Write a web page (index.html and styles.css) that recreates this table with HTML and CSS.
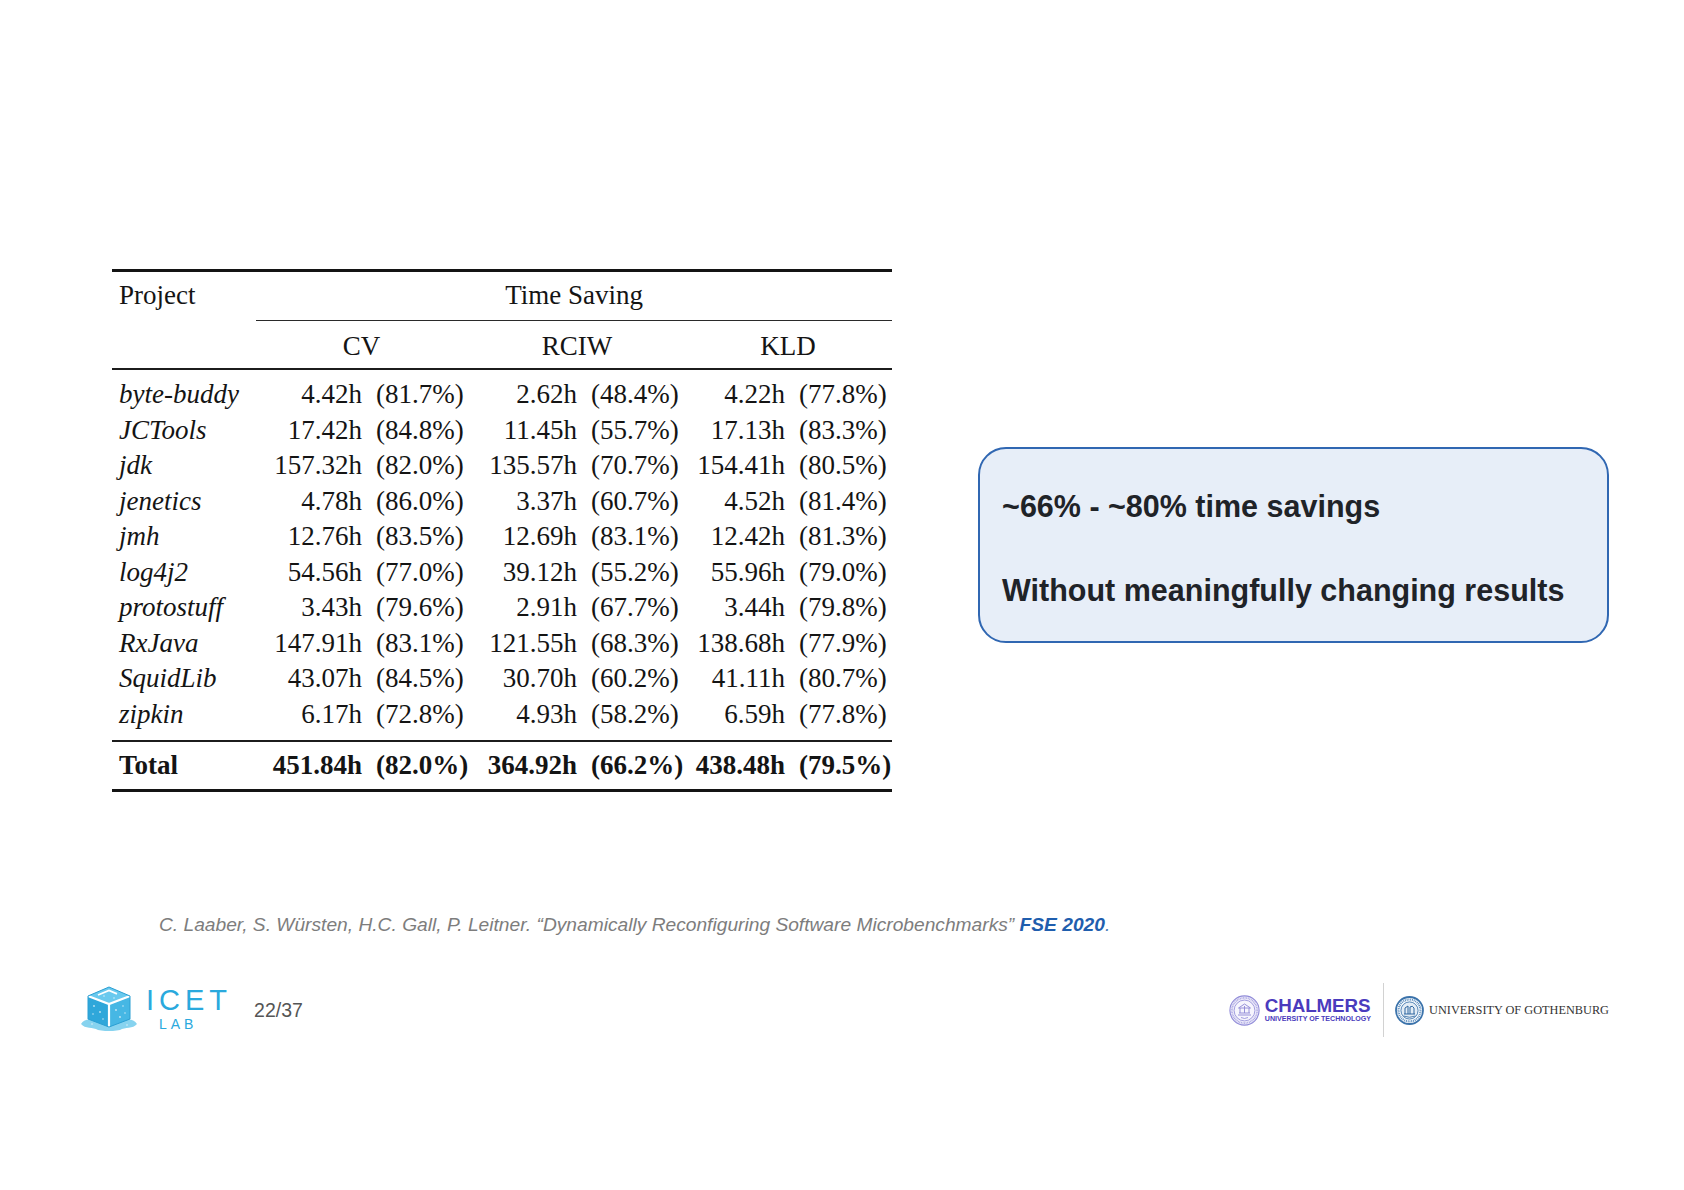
FILE: index.html
```html
<!DOCTYPE html>
<html lang="en">
<head>
<meta charset="utf-8">
<title>Time Saving</title>
<link rel="stylesheet" href="styles.css">
</head>
<body>
<div class="slide">
  <div class="content">
    <table class="results">
      <colgroup>
        <col class="c-proj"><col class="c-h1"><col class="c-p1"><col class="c-h2"><col class="c-p2"><col class="c-h3"><col class="c-p3">
      </colgroup>
      <thead>
        <tr class="head-top">
          <th class="proj">Project</th>
          <th class="group" colspan="6"><div class="cmid">Time Saving</div></th>
        </tr>
        <tr class="head-sub">
          <th class="proj"></th>
          <th class="sub" colspan="2">CV</th>
          <th class="sub" colspan="2">RCIW</th>
          <th class="sub" colspan="2">KLD</th>
        </tr>
      </thead>
      <tbody class="data">
        <tr><td class="name">byte-buddy</td><td>4.42h</td><td>(81.7%)</td><td>2.62h</td><td>(48.4%)</td><td>4.22h</td><td>(77.8%)</td></tr>
        <tr><td class="name">JCTools</td><td>17.42h</td><td>(84.8%)</td><td>11.45h</td><td>(55.7%)</td><td>17.13h</td><td>(83.3%)</td></tr>
        <tr><td class="name">jdk</td><td>157.32h</td><td>(82.0%)</td><td>135.57h</td><td>(70.7%)</td><td>154.41h</td><td>(80.5%)</td></tr>
        <tr><td class="name">jenetics</td><td>4.78h</td><td>(86.0%)</td><td>3.37h</td><td>(60.7%)</td><td>4.52h</td><td>(81.4%)</td></tr>
        <tr><td class="name">jmh</td><td>12.76h</td><td>(83.5%)</td><td>12.69h</td><td>(83.1%)</td><td>12.42h</td><td>(81.3%)</td></tr>
        <tr><td class="name">log4j2</td><td>54.56h</td><td>(77.0%)</td><td>39.12h</td><td>(55.2%)</td><td>55.96h</td><td>(79.0%)</td></tr>
        <tr><td class="name">protostuff</td><td>3.43h</td><td>(79.6%)</td><td>2.91h</td><td>(67.7%)</td><td>3.44h</td><td>(79.8%)</td></tr>
        <tr><td class="name">RxJava</td><td>147.91h</td><td>(83.1%)</td><td>121.55h</td><td>(68.3%)</td><td>138.68h</td><td>(77.9%)</td></tr>
        <tr><td class="name">SquidLib</td><td>43.07h</td><td>(84.5%)</td><td>30.70h</td><td>(60.2%)</td><td>41.11h</td><td>(80.7%)</td></tr>
        <tr><td class="name">zipkin</td><td>6.17h</td><td>(72.8%)</td><td>4.93h</td><td>(58.2%)</td><td>6.59h</td><td>(77.8%)</td></tr>
      </tbody>
      <tbody class="total">
        <tr><td class="tname">Total</td><td>451.84h</td><td>(82.0%)</td><td>364.92h</td><td>(66.2%)</td><td>438.48h</td><td>(79.5%)</td></tr>
      </tbody>
    </table>

    <div class="callout">
      <p class="callout-line">~66% - ~80% time savings</p>
      <p class="callout-line second">Without meaningfully changing results</p>
    </div>
  </div>

  <p class="cite">C. Laaber, S. Würsten, H.C. Gall, P. Leitner. “Dynamically Reconfiguring Software Microbenchmarks” <span class="venue">FSE 2020</span><span class="venue-dot">.</span></p>

  <footer class="footer">
    <div class="brand">
      <svg class="cube" width="58" height="47" viewBox="0 0 58 47" aria-hidden="true">
        <path d="M1 40 C5 34 11 36 14 33 L44 33 C47 36 53 34 57 40 C53 45 45 43 40 46 C34 47.5 24 47.5 18 46 C13 43 5 45 1 40 Z" fill="#5fc4ea" opacity="0.75"/>
        <polygon points="8,12 29,20 29,43 8,35" fill="#2fa7da"/>
        <polygon points="50,12 50,35 29,43 29,20" fill="#46b7e4"/>
        <polygon points="29,3 50,12 29,20 8,12" fill="#69c9ee"/>
        <polyline points="8,12 29,20 50,12" fill="none" stroke="#ffffff" stroke-width="2.2"/>
        <line x1="29" y1="20" x2="29" y2="43" stroke="#ffffff" stroke-width="2.2"/>
        <polyline points="18,11 29,6.5 37,9.8" fill="none" stroke="#ffffff" stroke-width="1.8"/>
        <polyline points="8,12 8,35 29,43 50,35 50,12 29,3 8,12" fill="none" stroke="#2a9fd3" stroke-width="1"/>
        <g fill="#ffffff" opacity="0.7">
          <circle cx="14" cy="22" r="0.9"/><circle cx="20" cy="28" r="0.9"/><circle cx="13" cy="30" r="0.8"/>
          <circle cx="23" cy="35" r="0.8"/><circle cx="36" cy="26" r="0.9"/><circle cx="43" cy="22" r="0.8"/>
          <circle cx="40" cy="33" r="0.9"/><circle cx="45" cy="29" r="0.8"/><circle cx="24" cy="12" r="0.8"/>
          <circle cx="34" cy="14" r="0.8"/><circle cx="12" cy="40" r="0.8"/><circle cx="47" cy="41" r="0.8"/>
        </g>
      </svg>
      <div class="icet">
        <span class="icet-name">ICET</span>
        <span class="icet-lab">LAB</span>
      </div>
      <span class="page-num">22/37</span>
    </div>
    <div class="partners">
      <svg class="seal" width="31" height="31" viewBox="0 0 31 31" aria-hidden="true">
        <circle cx="15.5" cy="15.5" r="14.6" fill="#eceaf9" stroke="#908bd8" stroke-width="1.1"/>
        <circle cx="15.5" cy="15.5" r="12.6" fill="none" stroke="#a7a3e1" stroke-width="1.6" stroke-dasharray="0.8 0.8"/>
        <circle cx="15.5" cy="15.5" r="10.4" fill="#f6f5fd" stroke="#908bd8" stroke-width="0.8"/>
        <path d="M9 20 L22 20 M10 18 L21 18 M11 18 L11 13 M15.5 18 L15.5 11 M20 18 L20 13 M9.5 13 L15.5 9 L21.5 13 Z" fill="none" stroke="#8c87d5" stroke-width="0.9"/>
        <path d="M12 22.5 Q15.5 24.5 19 22.5" fill="none" stroke="#8c87d5" stroke-width="0.8"/>
      </svg>
      <div class="chalmers">
        <span class="chalmers-name">CHALMERS</span>
        <span class="chalmers-sub">UNIVERSITY OF TECHNOLOGY</span>
      </div>
      <span class="divider"></span>
      <svg class="seal gu" width="29" height="29" viewBox="0 0 29 29" aria-hidden="true">
        <circle cx="14.5" cy="14.5" r="13.5" fill="#ffffff" stroke="#3b73ab" stroke-width="1.8"/>
        <circle cx="14.5" cy="14.5" r="11" fill="none" stroke="#5f8fbf" stroke-width="2.2" stroke-dasharray="1 0.8"/>
        <circle cx="14.5" cy="14.5" r="8.6" fill="#e3ecf5" stroke="#3b73ab" stroke-width="0.9"/>
        <path d="M9 18 L20 18 M10 18 L10 12 L13 10 L13 18 M15 18 L15 11 Q17.5 9 19 12 L19 18" fill="none" stroke="#2f66a0" stroke-width="1"/>
        <path d="M8.5 20 Q14.5 22.5 20.5 20" fill="none" stroke="#2f66a0" stroke-width="0.8"/>
      </svg>
      <span class="gu-name">UNIVERSITY OF GOTHENBURG</span>
    </div>
  </footer>
</div>
</body>
</html>
```

FILE: styles.css
```css
html, body {
  margin: 0;
  padding: 0;
  background: #ffffff;
}

.slide {
  width: 1684px;
  height: 1190px;
  box-sizing: border-box;
  padding: 269px 75px 0 80px;
  overflow: hidden;
}

.content {
  display: flex;
  align-items: flex-start;
  gap: 86px;
  margin-left: 32px;
}

/* ---------- table ---------- */
.results {
  width: 780px;
  flex: none;
  table-layout: fixed;
  border-collapse: separate;
  border-spacing: 0;
  border-top: 3px solid #141414;
  border-bottom: 3px solid #141414;
  font-family: "Liberation Serif", "Times New Roman", serif;
  font-size: 27px;
  color: #141414;
}

.c-proj { width: 141px; }
.c-h1 { width: 116px; }
.c-p1 { width: 101px; }
.c-h2 { width: 114px; }
.c-p2 { width: 100px; }
.c-h3 { width: 108px; }
.c-p3 { width: 100px; }

.results th,
.results td {
  padding: 0 7px;
  line-height: 35.55px;
  white-space: nowrap;
  font-weight: normal;
  text-align: right;
}

.results th.proj {
  text-align: left;
  padding-top: 6px;
  padding-bottom: 6px;
  vertical-align: top;
}

.head-top .group {
  padding: 0 0 0 3px;
  text-align: center;
}

.cmid {
  padding: 6px 0;
  border-bottom: 1px solid #2a2a2a;
}

.head-sub th {
  padding-top: 8px;
  padding-bottom: 4px;
  border-bottom: 2px solid #1c1c1c;
}

.head-sub th.proj {
  padding-top: 8px;
  padding-bottom: 4px;
}

.head-sub .sub {
  text-align: center;
}

.results td.name {
  text-align: left;
  font-style: italic;
}

.data tr:first-child td {
  padding-top: 7px;
}

.data tr:last-child td {
  padding-bottom: 7px;
  border-bottom: 2px solid #1c1c1c;
}

.total td {
  font-weight: bold;
  padding-top: 6px;
  padding-bottom: 6px;
}

.results td.tname {
  text-align: left;
}

/* ---------- callout ---------- */
.callout {
  flex: none;
  width: 631px;
  box-sizing: border-box;
  margin-top: 178px;
  padding: 39px 22px 33px;
  border: 2.5px solid #3067b2;
  border-radius: 28px;
  background: #e7eef8;
  font-family: "Liberation Sans", Arial, sans-serif;
  font-weight: bold;
  font-size: 30.5px;
  line-height: 36px;
  color: #1f2328;
}

.callout-line {
  margin: 0;
  white-space: nowrap;
}

.callout-line.second {
  margin-top: 48px;
}

/* ---------- citation ---------- */
.cite {
  margin: 121px 0 0 79px;
  font-family: "Liberation Sans", Arial, sans-serif;
  font-style: italic;
  font-size: 19.2px;
  line-height: 23px;
  color: #7d7d7d;
  white-space: nowrap;
}

.venue {
  font-weight: bold;
  color: #1f5eae;
}

.venue-dot {
  color: #4f7fba;
}

/* ---------- footer ---------- */
.footer {
  margin-top: 47px;
  height: 54px;
  display: flex;
  align-items: center;
  justify-content: space-between;
}

.brand {
  display: flex;
  align-items: center;
}

.cube {
  display: block;
  margin-top: -6px;
}

.icet {
  display: flex;
  flex-direction: column;
  margin: -4px 0 0 8px;
  color: #2aa9dd;
  font-family: "Liberation Sans", Arial, sans-serif;
  font-weight: 400;
}

.icet-name {
  font-size: 29px;
  line-height: 32.4px;
  letter-spacing: 5px;
}

.icet-lab {
  font-size: 14px;
  line-height: 15.6px;
  letter-spacing: 4px;
  margin-left: 13px;
}

.page-num {
  margin-left: 22px;
  font-family: "Liberation Sans", Arial, sans-serif;
  font-size: 19.5px;
  color: #555555;
}

.partners {
  display: flex;
  align-items: center;
  height: 54px;
}

.seal {
  display: block;
  flex: none;
}

.chalmers {
  display: flex;
  flex-direction: column;
  margin-left: 5px;
  color: #4a3bbd;
  font-family: "Liberation Sans", Arial, sans-serif;
  font-weight: bold;
}

.chalmers-name {
  font-size: 18.8px;
  line-height: 18px;
  letter-spacing: -0.1px;
}

.chalmers-sub {
  font-size: 7.1px;
  line-height: 9px;
}

.divider {
  width: 1px;
  height: 54px;
  margin: 0 11px 0 12px;
  background: #d2d2d2;
}

.gu-name {
  margin-left: 5px;
  font-family: "Liberation Serif", "Times New Roman", serif;
  font-size: 12.3px;
  letter-spacing: 0;
  color: #333333;
  white-space: nowrap;
}
```
